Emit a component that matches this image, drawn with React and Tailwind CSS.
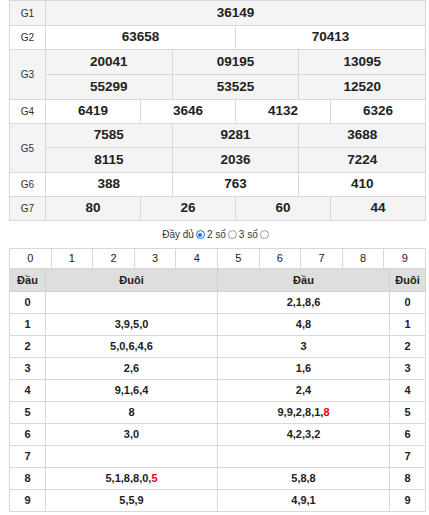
import React from 'react';

const prizes = [
  { name: 'G1', cols: 1, rows: [['36149']], h: ['h-[24px]'], bg: 'bg-[#f4f4f4]' },
  { name: 'G2', cols: 2, rows: [['63658', '70413']], h: ['h-[23px]'], bg: 'bg-white' },
  { name: 'G3', cols: 3, rows: [['20041', '09195', '13095'], ['55299', '53525', '12520']], h: ['h-[24px]', 'h-[24px]'], bg: 'bg-[#f4f4f4]' },
  { name: 'G4', cols: 4, rows: [['6419', '3646', '4132', '6326']], h: ['h-[23px]'], bg: 'bg-white' },
  { name: 'G5', cols: 3, rows: [['7585', '9281', '3688'], ['8115', '2036', '7224']], h: ['h-[23px]', 'h-[24px]'], bg: 'bg-[#f4f4f4]' },
  { name: 'G6', cols: 3, rows: [['388', '763', '410']], h: ['h-[23px]'], bg: 'bg-white' },
  { name: 'G7', cols: 4, rows: [['80', '26', '60', '44']], h: ['h-[23px]'], bg: 'bg-[#f4f4f4]' },
];

const gridCols = { 1: 'grid-cols-1', 2: 'grid-cols-2', 3: 'grid-cols-3', 4: 'grid-cols-4' };

const loto = [
  { d: '0', tail: '', head: '2,1,8,6' },
  { d: '1', tail: '3,9,5,0', head: '4,8' },
  { d: '2', tail: '5,0,6,4,6', head: '3' },
  { d: '3', tail: '2,6', head: '1,6' },
  { d: '4', tail: '9,1,6,4', head: '2,4' },
  { d: '5', tail: '8', head: '9,9,2,8,1,', headRed: '8' },
  { d: '6', tail: '3,0', head: '4,2,3,2' },
  { d: '7', tail: '', head: '' },
  { d: '8', tail: '5,1,8,8,0,', tailRed: '5', head: '5,8,8' },
  { d: '9', tail: '5,5,9', head: '4,9,1' },
];

const Radio = ({ checked }) => (
  <span
    className={`inline-block w-[9px] h-[9px] rounded-full border align-[-1px] mx-[2px] ${
      checked ? 'border-[#1a6fd8] bg-white p-[1.5px]' : 'border-[#9a9a9a] bg-white'
    }`}
  >
    {checked && <span className="block w-full h-full rounded-full bg-[#1a6fd8]" />}
  </span>
);

export default function App() {
  return (
    <div className="w-[429px] h-[515px] bg-white text-[#222]" style={{ fontFamily: '"Liberation Sans", Arial, sans-serif' }}>
      <div className="ml-[9px] w-[417px] border-l border-t border-[#d8d8d8]">
        {prizes.map((p) => (
          <div key={p.name} className={`flex ${p.bg}`}>
            <div className="w-[36px] shrink-0 border-r border-b border-[#d8d8d8] flex items-center justify-center text-[10px] text-[#333]">
              {p.name}
            </div>
            <div className="flex-1 flex flex-col">
              {p.rows.map((r, i) => (
                <div key={i} className={`grid ${gridCols[p.cols]}`}>
                  {r.map((n, j) => (
                    <div
                      key={j}
                      className={`${p.h[i]} box-content border-r border-b border-[#d8d8d8] flex items-center justify-center text-[13.5px] font-bold`}
                    >
                      {n}
                    </div>
                  ))}
                </div>
              ))}
            </div>
          </div>
        ))}
      </div>

      <div className="h-[27px] flex items-center justify-center text-[10px] text-[#333] pl-[4px]">
        <span>Đầy đủ</span>
        <Radio checked />
        <span>2 số</span>
        <Radio />
        <span>3 số</span>
        <Radio />
      </div>

      <div className="ml-[9px] w-[417px] border-l border-t border-[#d8d8d8]">
        <div className="grid grid-cols-10">
          {['0', '1', '2', '3', '4', '5', '6', '7', '8', '9'].map((d) => (
            <div key={d} className="h-[19px] box-content border-r border-b border-[#d8d8d8] flex items-center justify-center text-[11px]">
              {d}
            </div>
          ))}
        </div>
        <div className="grid grid-cols-[36px_172px_172px_36px] bg-[#dedede] font-bold text-[11px]">
          <div className="h-[22px] box-content border-r border-b border-[#d0d0d0] flex items-center justify-center">Đầu</div>
          <div className="h-[22px] box-content border-r border-b border-[#d0d0d0] flex items-center justify-center">Đuôi</div>
          <div className="h-[22px] box-content border-r border-b border-[#d0d0d0] flex items-center justify-center">Đầu</div>
          <div className="h-[22px] box-content border-r border-b border-[#d0d0d0] flex items-center justify-center">Đuôi</div>
        </div>
        {loto.map((r) => (
          <div key={r.d} className="grid grid-cols-[36px_172px_172px_36px] font-bold text-[11px]">
            <div className="h-[21px] box-content border-r border-b border-[#d8d8d8] flex items-center justify-center">{r.d}</div>
            <div className="h-[21px] box-content border-r border-b border-[#d8d8d8] flex items-center justify-center">
              {r.tail}
              {r.tailRed && <span className="text-[#e00]">{r.tailRed}</span>}
            </div>
            <div className="h-[21px] box-content border-r border-b border-[#d8d8d8] flex items-center justify-center">
              {r.head}
              {r.headRed && <span className="text-[#e00]">{r.headRed}</span>}
            </div>
            <div className="h-[21px] box-content border-r border-b border-[#d8d8d8] flex items-center justify-center">{r.d}</div>
          </div>
        ))}
      </div>
    </div>
  );
}
